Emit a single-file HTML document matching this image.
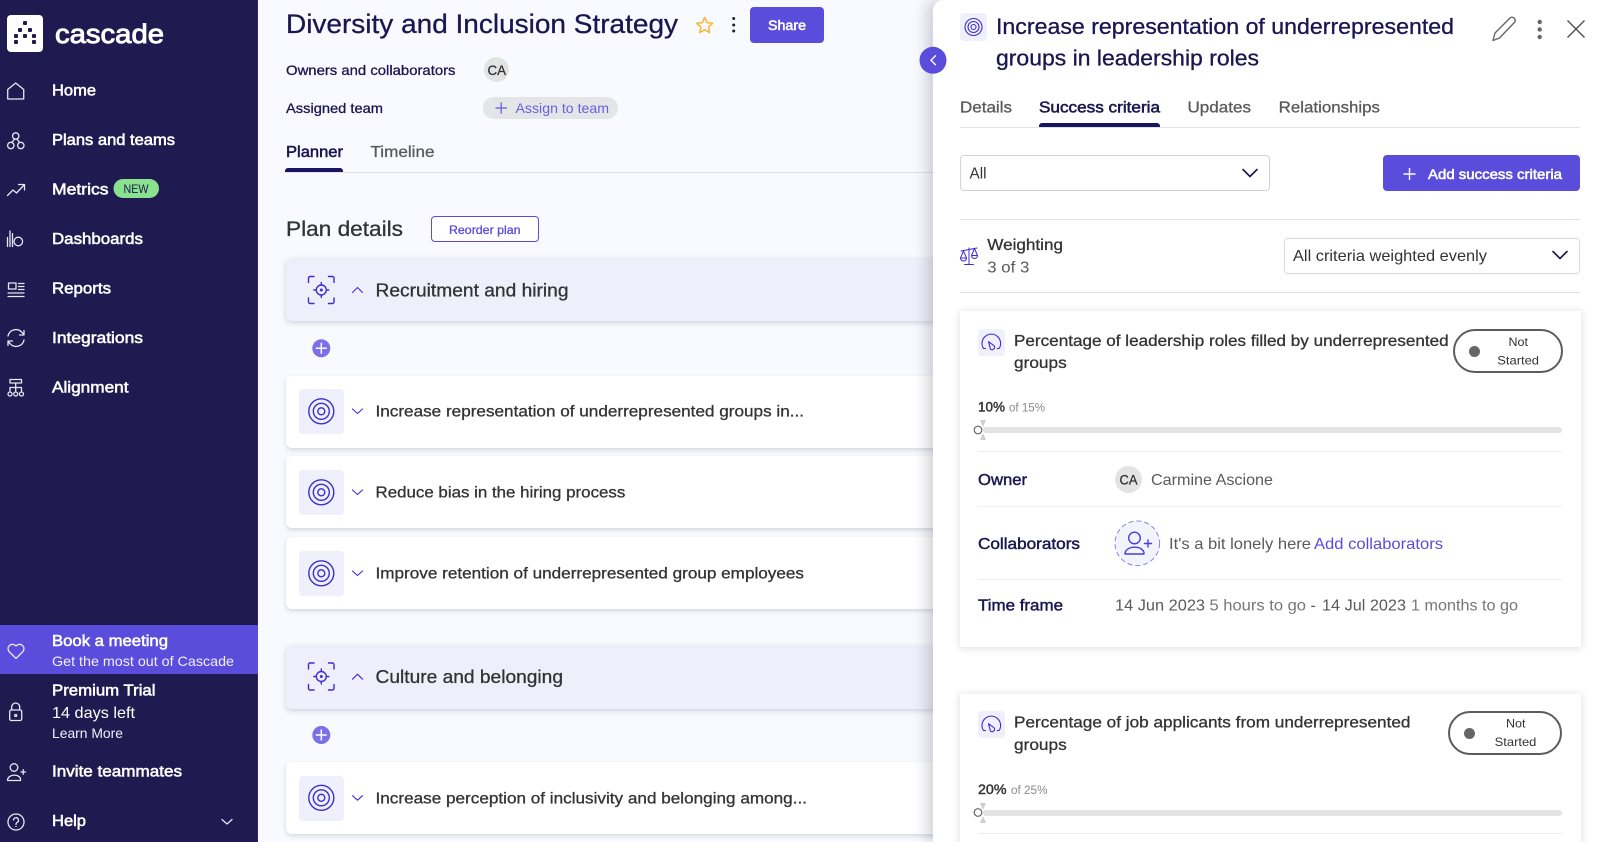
<!DOCTYPE html>
<html lang="en"><head><meta charset="utf-8"><title>Diversity and Inclusion Strategy</title>
<style>
html,body{margin:0;padding:0;width:1600px;height:842px;overflow:hidden;background:#f9faff}
body{position:relative;font-family:"Liberation Sans",sans-serif}
#wrap{position:absolute;left:0;top:0;width:1600px;height:842px;overflow:hidden;filter:blur(.3px)}
.b{position:absolute;box-sizing:border-box}
.row{left:285.5px;width:660px;background:#fff;border-radius:6px;box-shadow:0 2px 5px rgba(30,30,60,.16)}
.sec{left:285.5px;width:660px;background:#efeffb;border-radius:6px;box-shadow:0 2px 6px rgba(30,30,60,.18)}
.ib{background:#f0effc;border-radius:4px}
.card{left:960px;width:620.5px;background:#fff;box-shadow:0 1px 8px rgba(30,30,60,.16)}
.line{height:1px}
svg{position:absolute;left:0;top:0}
text{font-family:"Liberation Sans",sans-serif;stroke-width:0}
.m{stroke-width:.3px}
.s{stroke-width:.55px}
.w{fill:#fff;stroke:#fff}.wd{fill:#f0eefc;stroke:#f0eefc}
.n{fill:#1a1650;stroke:#1a1650}.d{fill:#333;stroke:#333}.g{fill:#5a5a5a;stroke:#5a5a5a}.gl{fill:#8a8a8a;stroke:#8a8a8a}
.p{fill:#5b4ddb;stroke:#5b4ddb}
.ic{fill:none;stroke:#e8e7f2;stroke-width:1.3;stroke-linecap:round;stroke-linejoin:round}
.v{fill:none;stroke:#3d2fcf;stroke-width:1.4;stroke-linecap:round;stroke-linejoin:round}
</style></head><body><div id="wrap">
<div class="b" style="left:0;top:0;width:258px;height:842px;background:#1f1b50;border-right:1px solid #2e2a63"></div>
<div class="b" style="left:0;top:625px;width:258px;height:49px;background:#5b4ddb"></div>
<div class="b" style="left:7px;top:15px;width:36px;height:37px;background:#fff;border-radius:4px"></div>
<div class="b" style="left:483px;top:97px;width:135px;height:22px;background:#e5e5e8;border-radius:11px"></div>
<div class="b" style="left:484px;top:57px;width:25px;height:25px;background:#e3e3e3;border-radius:50%"></div>
<div class="b" style="left:749.5px;top:7px;width:74.5px;height:36px;background:#5b4ddb;border-radius:4px"></div>
<div class="b" style="left:285px;top:168px;width:58px;height:4px;background:#1a1560;border-radius:3px 3px 0 0"></div>
<div class="b line" style="left:285px;top:172px;width:650px;background:#e1e1e6"></div>
<div class="b" style="left:431px;top:216px;width:108px;height:26px;background:#fff;border:1.5px solid #5b4ddb;border-radius:4px"></div>
<div class="b sec" style="top:258px;height:63px"></div>
<div class="b row" style="top:375.5px;height:72px"></div>
<div class="b row" style="top:456px;height:72px"></div>
<div class="b row" style="top:537px;height:72px"></div>
<div class="b sec" style="top:645px;height:63.5px"></div>
<div class="b row" style="top:762px;height:72px"></div>
<div class="b ib" style="left:299px;top:389px;width:45px;height:45px"></div>
<div class="b ib" style="left:299px;top:470px;width:45px;height:45px"></div>
<div class="b ib" style="left:299px;top:551px;width:45px;height:45px"></div>
<div class="b ib" style="left:299px;top:775.5px;width:45px;height:45px"></div>
<div class="b" style="left:933px;top:0;width:667px;height:842px;background:#fff;border-radius:10px 0 0 0;box-shadow:-6px 0 14px rgba(30,30,50,.2)"></div>
<div class="b ib" style="left:960px;top:13px;width:27px;height:28px"></div>
<div class="b line" style="left:960px;top:127px;width:620px;background:#e1e1e6"></div>
<div class="b" style="left:1039px;top:123px;width:121px;height:4px;background:#1a1560;border-radius:3px 3px 0 0"></div>
<div class="b" style="left:960px;top:155px;width:310px;height:36px;border:1.5px solid #d2d2d7;border-radius:4px"></div>
<div class="b" style="left:1382.5px;top:155px;width:197.5px;height:36px;background:#5b4ddb;border-radius:4px"></div>
<div class="b line" style="left:960px;top:219px;width:620px;background:#e3e2f2"></div>
<div class="b" style="left:1284px;top:237.5px;width:296px;height:36px;border:1.5px solid #d8d8dd;border-radius:4px"></div>
<div class="b line" style="left:960px;top:292px;width:620px;background:#dddcf0"></div>
<div class="b card" style="top:311px;height:336px"></div>
<div class="b card" style="top:693.5px;height:160px"></div>
<div class="b ib" style="left:978px;top:329px;width:27px;height:27px"></div>
<div class="b ib" style="left:978px;top:711px;width:27px;height:27px"></div>
<div class="b" style="left:1453px;top:329px;width:109.5px;height:44px;border:2px solid #5c5c5c;border-radius:22px"></div>
<div class="b" style="left:1448px;top:711px;width:114px;height:44px;border:2px solid #5c5c5c;border-radius:22px"></div>
<div class="b" style="left:1469px;top:345.5px;width:11px;height:11px;background:#666;border-radius:50%"></div>
<div class="b" style="left:1463.5px;top:727.5px;width:11px;height:11px;background:#666;border-radius:50%"></div>
<div class="b" style="left:983px;top:427px;width:579px;height:6px;background:#e3e3e3;border-radius:3px"></div>
<div class="b" style="left:983px;top:810px;width:579px;height:6px;background:#e3e3e3;border-radius:3px"></div>
<div class="b line" style="left:978px;top:451px;width:584px;background:#efefef"></div>
<div class="b line" style="left:978px;top:506px;width:584px;background:#efefef"></div>
<div class="b line" style="left:978px;top:579px;width:584px;background:#efefef"></div>
<div class="b line" style="left:978px;top:833px;width:584px;background:#efefef"></div>
<div class="b" style="left:1115px;top:466px;width:27px;height:27px;background:#e3e3e3;border-radius:50%"></div>

<svg width="1600" height="842" viewBox="0 0 1600 842" xmlns="http://www.w3.org/2000/svg">
<!-- logo -->
<g fill="#1f1b50"><rect x="23" y="21" width="4" height="4" rx="1"/><rect x="18" y="28" width="4" height="4" rx="1"/><rect x="28" y="28" width="4" height="4" rx="1"/><rect x="23" y="34" width="4" height="4" rx="1"/><rect x="14" y="34" width="4" height="4" rx="1"/><rect x="32" y="34" width="4" height="4" rx="1"/><rect x="14" y="40" width="4" height="4" rx="1"/><rect x="32" y="40" width="4" height="4" rx="1"/></g>
<text class="w" x="55" y="43" font-size="27" style="stroke-width:.9px" textLength="109" lengthAdjust="spacingAndGlyphs">cascade</text>
<!-- sidebar text -->
<g font-size="16">
<text class="w s" x="52" y="95.300" textLength="44" lengthAdjust="spacingAndGlyphs">Home</text>
<text class="w s" x="52" y="144.800" textLength="123" lengthAdjust="spacingAndGlyphs">Plans and teams</text>
<text class="w s" x="52" y="194.300" textLength="56.500" lengthAdjust="spacingAndGlyphs">Metrics</text>
<text class="w s" x="52" y="243.800" textLength="91" lengthAdjust="spacingAndGlyphs">Dashboards</text>
<text class="w s" x="52" y="293.300" textLength="59" lengthAdjust="spacingAndGlyphs">Reports</text>
<text class="w s" x="52" y="342.800" textLength="91" lengthAdjust="spacingAndGlyphs">Integrations</text>
<text class="w s" x="52" y="392.300" textLength="76.500" lengthAdjust="spacingAndGlyphs">Alignment</text>
<text class="w s" x="52" y="646" textLength="116" lengthAdjust="spacingAndGlyphs">Book a meeting</text>
<text class="w s" x="52" y="695.700" textLength="103.500" lengthAdjust="spacingAndGlyphs">Premium Trial</text>
<text class="w s" x="52" y="776.700" textLength="130" lengthAdjust="spacingAndGlyphs">Invite teammates</text>
<text class="w s" x="52" y="826" textLength="34" lengthAdjust="spacingAndGlyphs">Help</text>
</g>
<text class="wd" x="52" y="666" font-size="14" textLength="182" lengthAdjust="spacingAndGlyphs">Get the most out of Cascade</text>
<text class="w" x="52" y="718" font-size="16" textLength="83" lengthAdjust="spacingAndGlyphs">14 days left</text>
<text class="wd" x="52" y="738" font-size="14" textLength="71" lengthAdjust="spacingAndGlyphs">Learn More</text>
<rect x="113.500" y="179" width="45.500" height="19" rx="9.500" fill="#8ae28f"/>
<text class="n" x="123.500" y="193" font-size="12" textLength="25" lengthAdjust="spacingAndGlyphs">NEW</text>
<!-- sidebar icons -->
<g class="ic">
<path d="M7.700 99h16V89.500L15.700 83 7.700 89.500z"/>
<circle cx="15.700" cy="136" r="3.200"/><circle cx="10.800" cy="145.500" r="3.200"/><circle cx="20.800" cy="145.500" r="3.200"/><path d="M14.500 139l-2.500 3.500M17 139l2.500 3.500"/>
<path d="M7.500 195.500l5.500-5.500 3.500 3L24 185M18.500 184.500H24.500V190"/>
<path d="M7.500 246.500v-9M10 246.500V231M12.500 246.500v-13"/><circle cx="18.300" cy="241.500" r="4.300"/>
<rect x="8.500" y="283" width="7.500" height="6"/><path d="M18.500 283.500H24M18.500 286.500H24M18.500 289.500H24M8 293H24M8 296.500H24"/>
<path d="M8 336a8 8 0 0 1 14-3.500l2 2M24 330.500v4.500h-4.500M24 340a8 8 0 0 1-14 3.500l-2-2M8 345.500V341h4.500"/>
<rect x="10" y="379.500" width="11.500" height="3.500"/><path d="M15.700 383v8M10 391v-3.500h11.500V391"/><circle cx="10" cy="394" r="2"/><circle cx="15.700" cy="394" r="2"/><circle cx="21.500" cy="394" r="2"/>
<path d="M16 658.500l-7-7a4.400 4.400 0 0 1 7-5.500 4.400 4.400 0 0 1 7 5.500z"/>
<rect x="9.700" y="710" width="12" height="10.500" rx="1.500"/><path d="M11.700 710v-3a4 4 0 0 1 8 0v3"/><circle cx="15.700" cy="715.500" r="1"/>
<circle cx="14" cy="767.500" r="3.800"/><path d="M7.500 780.500c0-7 13-7 13-1v1z"/><path d="M21 772h4.500M23.200 769.700v4.600"/>
<circle cx="16" cy="822" r="8"/><path d="M13.500 820a2.500 2.500 0 1 1 3.500 2.500c-.8.500-1 1-1 2"/><path d="M16 826.500v.1"/>
<path d="M222 819.500l5 4.500 5-4.500"/>
</g>
<!-- main header -->
<text class="n m" x="286" y="33" font-size="27" textLength="392" lengthAdjust="spacingAndGlyphs">Diversity and Inclusion Strategy</text>
<path d="M704.700 17.500l2.400 5.100 5.600.7-4.100 3.800 1.100 5.500-5-2.800-5 2.800 1.100-5.500-4.100-3.800 5.600-.7z" fill="none" stroke="#fbb730" stroke-width="1.500" stroke-linejoin="round"/>
<g fill="#222"><circle cx="733.700" cy="18.500" r="1.500"/><circle cx="733.700" cy="25" r="1.500"/><circle cx="733.700" cy="31" r="1.500"/></g>
<text class="w s" x="768" y="30" font-size="14" textLength="38" lengthAdjust="spacingAndGlyphs">Share</text>
<text class="n m" x="286" y="75" font-size="14" textLength="169.500" lengthAdjust="spacingAndGlyphs">Owners and collaborators</text>
<text class="d m" x="487.500" y="75" font-size="14" textLength="18.500" lengthAdjust="spacingAndGlyphs">CA</text>
<text class="n m" x="286" y="113" font-size="14" textLength="97" lengthAdjust="spacingAndGlyphs">Assigned team</text>
<path d="M495.500 108h11.500M501.200 102.300v11.500" stroke="#6a5fe0" stroke-width="1.300" fill="none"/>
<text x="515.500" y="113" font-size="14" textLength="93.500" lengthAdjust="spacingAndGlyphs" style="fill:#6a5fe0">Assign to team</text>
<text class="n s" x="286" y="157" font-size="16" textLength="57" lengthAdjust="spacingAndGlyphs">Planner</text>
<text class="g m" x="370.500" y="157" font-size="16" textLength="64" lengthAdjust="spacingAndGlyphs">Timeline</text>
<text class="d m" x="286" y="236" font-size="21" textLength="117" lengthAdjust="spacingAndGlyphs">Plan details</text>
<text class="p m" x="449" y="234" font-size="12" textLength="71.500" lengthAdjust="spacingAndGlyphs">Reorder plan</text>
<!-- rows text -->
<text class="d m" x="375.500" y="296.700" font-size="18" textLength="193" lengthAdjust="spacingAndGlyphs">Recruitment and hiring</text>
<text class="d m" x="375.500" y="416.700" font-size="16" textLength="428.500" lengthAdjust="spacingAndGlyphs">Increase representation of underrepresented groups in...</text>
<text class="d m" x="375.500" y="497.700" font-size="16" textLength="249.800" lengthAdjust="spacingAndGlyphs">Reduce bias in the hiring process</text>
<text class="d m" x="375.500" y="578.700" font-size="16" textLength="428.500" lengthAdjust="spacingAndGlyphs">Improve retention of underrepresented group employees</text>
<text class="d m" x="375.500" y="683.200" font-size="18" textLength="187.500" lengthAdjust="spacingAndGlyphs">Culture and belonging</text>
<text class="d m" x="375.500" y="803.300" font-size="16" textLength="431.500" lengthAdjust="spacingAndGlyphs">Increase perception of inclusivity and belonging among...</text>
<!-- focus icons -->
<g class="v">
<g><path d="M308.500 282.500v-4.500a1.500 1.500 0 0 1 1.500-1.500h4M328.500 276.500h4a1.500 1.500 0 0 1 1.500 1.500v4.500M334 298v4a1.500 1.500 0 0 1-1.500 1.500h-4M314 303.500h-4a1.500 1.500 0 0 1-1.500-1.500v-4"/><circle cx="321.300" cy="290" r="5"/><path d="M321.300 282.500v2.500M321.300 295v2.500M313.800 290h2.500M326.300 290h2.500"/><circle cx="321.300" cy="290" r=".8" fill="#3d2fcf"/></g>
<g transform="translate(0 386.500)"><path d="M308.500 282.500v-4.500a1.500 1.500 0 0 1 1.500-1.500h4M328.500 276.500h4a1.500 1.500 0 0 1 1.500 1.500v4.500M334 298v4a1.500 1.500 0 0 1-1.500 1.500h-4M314 303.500h-4a1.500 1.500 0 0 1-1.500-1.500v-4"/><circle cx="321.300" cy="290" r="5"/><path d="M321.300 282.500v2.500M321.300 295v2.500M313.800 290h2.500M326.300 290h2.500"/><circle cx="321.300" cy="290" r=".8" fill="#3d2fcf"/></g>
<path d="M352.500 292.500l5-5 5 5M352.500 679.200l5-5 5 5" stroke-width="1.100"/>
<path d="M352.500 409l5 4.500 5-4.500M352.500 490l5 4.500 5-4.500M352.500 571l5 4.500 5-4.500M352.500 795.700l5 4.500 5-4.500" stroke-width="1.100"/>
<circle cx="321.300" cy="411.300" r="12.500"/><circle cx="321.300" cy="411.300" r="8"/><circle cx="321.300" cy="411.300" r="3.500"/>
<circle cx="321.300" cy="492.300" r="12.500"/><circle cx="321.300" cy="492.300" r="8"/><circle cx="321.300" cy="492.300" r="3.500"/>
<circle cx="321.300" cy="573.300" r="12.500"/><circle cx="321.300" cy="573.300" r="8"/><circle cx="321.300" cy="573.300" r="3.500"/>
<circle cx="321.300" cy="797.800" r="12.500"/><circle cx="321.300" cy="797.800" r="8"/><circle cx="321.300" cy="797.800" r="3.500"/>
<circle cx="973.500" cy="27" r="8.500" stroke-width="1.100"/><circle cx="973.500" cy="27" r="5.500" stroke-width="1.100"/><circle cx="973.500" cy="27" r="2.500" stroke-width="1.100"/>
</g>
<g><circle cx="321.300" cy="348.300" r="9" fill="#7b70e6"/><circle cx="321.300" cy="735" r="9" fill="#7b70e6"/><path d="M315.800 348.300h11M321.300 342.800v11M315.800 735h11M321.300 729.500v11" stroke="#fff" stroke-width="1.500"/></g>
<!-- collapse -->
<circle cx="933" cy="60.300" r="13.500" fill="#5b4ddb"/><path d="M935.500 55.800l-4.500 4.500 4.500 4.500" fill="none" stroke="#fff" stroke-width="1.400" stroke-linecap="round" stroke-linejoin="round"/>
<!-- panel header -->
<text class="n m" x="996" y="34" font-size="22" textLength="458" lengthAdjust="spacingAndGlyphs">Increase representation of underrepresented</text>
<text class="n m" x="996" y="65.500" font-size="22" textLength="263" lengthAdjust="spacingAndGlyphs">groups in leadership roles</text>
<path d="M1493 40.500l2-7.500 15-15c1.500-1.200 3-1 4.300.4 1.200 1.300 1.200 2.800.2 4L1499.500 38z" fill="none" stroke="#666" stroke-width="1.400" stroke-linejoin="round"/>
<g fill="#666"><circle cx="1539.700" cy="22" r="2.200"/><circle cx="1539.700" cy="29.500" r="2.200"/><circle cx="1539.700" cy="37" r="2.200"/></g>
<path d="M1567.500 20.500l17 17M1584.500 20.500l-17 17" stroke="#555" stroke-width="1.500" fill="none"/>
<text class="g m" x="960" y="112.500" font-size="16" textLength="52" lengthAdjust="spacingAndGlyphs">Details</text>
<text class="n s" x="1039" y="112.500" font-size="16" textLength="121" lengthAdjust="spacingAndGlyphs">Success criteria</text>
<text class="g m" x="1187.500" y="112.500" font-size="16" textLength="63.500" lengthAdjust="spacingAndGlyphs">Updates</text>
<text class="g m" x="1278.700" y="112.500" font-size="16" textLength="101.300" lengthAdjust="spacingAndGlyphs">Relationships</text>
<text class="d" x="969.500" y="178.500" font-size="16" textLength="17" lengthAdjust="spacingAndGlyphs">All</text>
<path d="M1243 169.500l7 7 7-7M1553 251.500l7 7 7-7" fill="none" stroke="#1a1650" stroke-width="1.600" stroke-linecap="round" stroke-linejoin="round"/>
<path d="M1403.500 174h12M1409.500 168v12" stroke="#fff" stroke-width="1.400"/>
<text class="w s" x="1428" y="179" font-size="14" textLength="134" lengthAdjust="spacingAndGlyphs">Add success criteria</text>
<g class="v" style="stroke-width:1"><path d="M969 248v16M964.500 264.500h9M961 251l8-1.500 8-1.500M963.500 251l-3 7h6zM974.500 248.500l-3 7h6zM960.500 258a3 3 0 0 0 6 0M971.500 255.500a3 3 0 0 0 6 0"/></g>
<text class="d m" x="987.300" y="250" font-size="16" textLength="75.700" lengthAdjust="spacingAndGlyphs">Weighting</text>
<text class="g" x="987.300" y="272.300" font-size="16" textLength="42" lengthAdjust="spacingAndGlyphs">3 of 3</text>
<text class="d" x="1293" y="261" font-size="16" textLength="194" lengthAdjust="spacingAndGlyphs">All criteria weighted evenly</text>
<!-- card icons: gauge -->
<g class="v" style="stroke-width:1.100">
<path d="M985.500 348.500h-2a9.300 9.300 0 1 1 15.600 0h-2M988.500 341.700l5.500 4a2.500 2.500 0 0 1-3.500 3.500z"/>
<path d="M985.500 730.500h-2a9.300 9.300 0 1 1 15.600 0h-2M988.500 723.700l5.500 4a2.500 2.500 0 0 1-3.500 3.500z"/>
</g>
<text class="d m" x="1014" y="346" font-size="16" textLength="434.700" lengthAdjust="spacingAndGlyphs">Percentage of leadership roles filled by underrepresented</text>
<text class="d m" x="1014" y="368" font-size="16" textLength="52.700" lengthAdjust="spacingAndGlyphs">groups</text>
<text class="d" x="1508.500" y="346" font-size="12" textLength="19.500" lengthAdjust="spacingAndGlyphs">Not</text>
<text class="d" x="1497.300" y="364.300" font-size="12" textLength="41.700" lengthAdjust="spacingAndGlyphs">Started</text>
<text class="d m" x="978" y="411.700" font-size="13.500" textLength="27" lengthAdjust="spacingAndGlyphs" style="stroke-width:.45px">10%</text>
<text class="gl" x="1009" y="411.700" font-size="11.500" textLength="36" lengthAdjust="spacingAndGlyphs">of 15%</text>
<path d="M980 420h6l-3 7zM980 440h6l-3-7z" fill="#cfcfcf"/>
<circle cx="978" cy="430" r="3.800" fill="#fff" stroke="#666" stroke-width="1.200"/>
<text class="n" x="978" y="485" font-size="16" textLength="49" lengthAdjust="spacingAndGlyphs" style="stroke-width:.45px">Owner</text>
<text class="d m" x="1119.500" y="484.500" font-size="14" textLength="18" lengthAdjust="spacingAndGlyphs">CA</text>
<text class="g" x="1151" y="485" font-size="16" textLength="122" lengthAdjust="spacingAndGlyphs">Carmine Ascione</text>
<text class="n" x="978" y="549" font-size="16" textLength="102" lengthAdjust="spacingAndGlyphs" style="stroke-width:.45px">Collaborators</text>
<circle cx="1137.300" cy="543.300" r="22.300" fill="#f3f3fb" stroke="#8b82ea" stroke-width="1" stroke-dasharray="5 3"/>
<g class="v" style="stroke:#4a3de0"><circle cx="1134.500" cy="538" r="5.800"/><path d="M1125 554c0-9 19-9 19-.5v.5zM1144.500 543.500h7M1148 540v7"/></g>
<text class="g" x="1169" y="549" font-size="16" textLength="142" lengthAdjust="spacingAndGlyphs">It's a bit lonely here</text>
<text class="p" x="1314" y="549" font-size="16" textLength="129" lengthAdjust="spacingAndGlyphs">Add collaborators</text>
<text class="n" x="978" y="610.500" font-size="16" textLength="85" lengthAdjust="spacingAndGlyphs" style="stroke-width:.45px">Time frame</text>
<text class="g" x="1115" y="610.500" font-size="16" textLength="90" lengthAdjust="spacingAndGlyphs">14 Jun 2023</text>
<text x="1209.500" y="610.500" font-size="16" textLength="96.500" lengthAdjust="spacingAndGlyphs" style="fill:#777">5 hours to go</text>
<text class="g" x="1310.500" y="610.500" font-size="16">-</text>
<text class="g" x="1322" y="610.500" font-size="16" textLength="84" lengthAdjust="spacingAndGlyphs">14 Jul 2023</text>
<text x="1411" y="610.500" font-size="16" textLength="107" lengthAdjust="spacingAndGlyphs" style="fill:#777">1 months to go</text>
<!-- card 2 -->
<text class="d m" x="1014" y="727.700" font-size="16" textLength="396.500" lengthAdjust="spacingAndGlyphs">Percentage of job applicants from underrepresented</text>
<text class="d m" x="1014" y="750" font-size="16" textLength="52.700" lengthAdjust="spacingAndGlyphs">groups</text>
<text class="d" x="1506" y="727.700" font-size="12" textLength="19.500" lengthAdjust="spacingAndGlyphs">Not</text>
<text class="d" x="1494.700" y="746" font-size="12" textLength="41.700" lengthAdjust="spacingAndGlyphs">Started</text>
<text class="d" x="978" y="794" font-size="13.500" textLength="28.500" lengthAdjust="spacingAndGlyphs" style="stroke-width:.45px">20%</text>
<text class="gl" x="1011" y="794" font-size="11.500" textLength="36.500" lengthAdjust="spacingAndGlyphs">of 25%</text>
<path d="M980 803h6l-3 7zM980 823h6l-3-7z" fill="#cfcfcf"/>
<circle cx="978" cy="812.500" r="3.800" fill="#fff" stroke="#666" stroke-width="1.200"/>
</svg>
</div></body></html>
